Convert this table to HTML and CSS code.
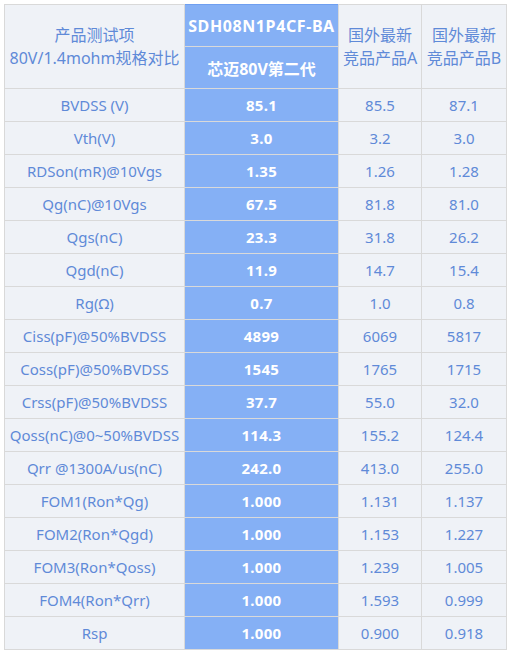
FILE: index.html
```html
<!DOCTYPE html>
<html lang="zh-CN">
<head>
<meta charset="utf-8">
<title>80V/1.4mohm 规格对比</title>
<link rel="stylesheet" href="styles.css">
</head>
<body>
<table class="spec">
  <colgroup>
    <col class="c-name"><col class="c-main"><col class="c-a"><col class="c-b">
  </colgroup>
  <thead>
    <tr>
      <th rowspan="2" class="hd">产品测试项<br>80V/1.4mohm规格对比</th>
      <th class="hd-main hd-top">SDH08N1P4CF-BA</th>
      <th rowspan="2" class="hd">国外最新<br>竞品产品A</th>
      <th rowspan="2" class="hd">国外最新<br>竞品产品B</th>
    </tr>
    <tr>
      <th class="hd-main hd-bot">芯迈80V第二代</th>
    </tr>
  </thead>
  <tbody>
    <tr><td>BVDSS (V)</td><td class="m">85.1</td><td>85.5</td><td>87.1</td></tr>
    <tr><td>Vth(V)</td><td class="m">3.0</td><td>3.2</td><td>3.0</td></tr>
    <tr><td>RDSon(mR)@10Vgs</td><td class="m">1.35</td><td>1.26</td><td>1.28</td></tr>
    <tr><td>Qg(nC)@10Vgs</td><td class="m">67.5</td><td>81.8</td><td>81.0</td></tr>
    <tr><td>Qgs(nC)</td><td class="m">23.3</td><td>31.8</td><td>26.2</td></tr>
    <tr><td>Qgd(nC)</td><td class="m">11.9</td><td>14.7</td><td>15.4</td></tr>
    <tr><td>Rg(Ω)</td><td class="m">0.7</td><td>1.0</td><td>0.8</td></tr>
    <tr><td>Ciss(pF)@50%BVDSS</td><td class="m">4899</td><td>6069</td><td>5817</td></tr>
    <tr><td>Coss(pF)@50%BVDSS</td><td class="m">1545</td><td>1765</td><td>1715</td></tr>
    <tr><td>Crss(pF)@50%BVDSS</td><td class="m">37.7</td><td>55.0</td><td>32.0</td></tr>
    <tr><td>Qoss(nC)@0~50%BVDSS</td><td class="m">114.3</td><td>155.2</td><td>124.4</td></tr>
    <tr><td>Qrr @1300A/us(nC)</td><td class="m">242.0</td><td>413.0</td><td>255.0</td></tr>
    <tr><td>FOM1(Ron*Qg)</td><td class="m">1.000</td><td>1.131</td><td>1.137</td></tr>
    <tr><td>FOM2(Ron*Qgd)</td><td class="m">1.000</td><td>1.153</td><td>1.227</td></tr>
    <tr><td>FOM3(Ron*Qoss)</td><td class="m">1.000</td><td>1.239</td><td>1.005</td></tr>
    <tr><td>FOM4(Ron*Qrr)</td><td class="m">1.000</td><td>1.593</td><td>0.999</td></tr>
    <tr><td>Rsp</td><td class="m">1.000</td><td>0.900</td><td>0.918</td></tr>
  </tbody>
</table>
</body>
</html>
```

FILE: styles.css
```css
html, body {
  margin: 0;
  padding: 0;
  background: #ffffff;
}
body {
  padding: 4px;
  font-family: "Noto Sans", "Noto Sans CJK SC", sans-serif;
}
.spec {
  border-collapse: collapse;
  table-layout: fixed;
  width: 502px;
  color: #5f8ad8;
  font-size: 15px;
}
.c-name { width: 180px; }
.c-main { width: 154px; }
.c-a { width: 83px; }
.c-b { width: 85px; }
.spec th,
.spec td {
  border: 1px solid #d9d9d9;
  background: #eff2f7;
  text-align: center;
  padding: 0;
  height: 32px;
  font-weight: normal;
  white-space: nowrap;
}
.spec .hd {
  font-size: 16px;
  line-height: 23px;
}
.spec .hd-main {
  background: #85b0f5;
  color: #ffffff;
  font-weight: bold;
  height: 41px;
}
.spec .hd-top {
  font-size: 16px;
  letter-spacing: 0.6px;
  border-top-color: #6f9ff0;
}
.spec .hd-bot {
  font-size: 16px;
}
.spec td.m {
  background: #85b0f5;
  color: #ffffff;
  font-weight: bold;
  font-size: 15px;
  letter-spacing: 0.3px;
}
```
